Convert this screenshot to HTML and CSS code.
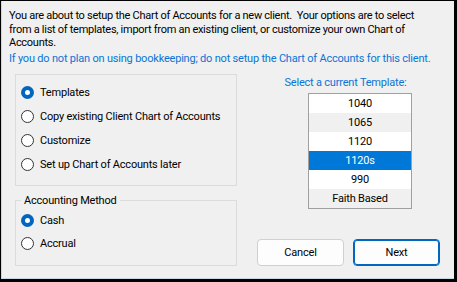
FILE: index.html
```html
<!DOCTYPE html>
<html lang="en">

<head>
    <meta charset="UTF-8">
    <meta name="viewport" content="width=device-width, initial-scale=1.0">
    <title>Chart of Accounts Setup</title>
    <link rel="stylesheet" href="styles.css">
</head>

<body>
    <div class="window">
        <p class="intro">You are about to setup the Chart of Accounts for a new client.&nbsp; Your options are to select<br>from a list of templates, import from an existing client, or customize your own Chart of<br>Accounts.</p>
        <p class="note">If you do not plan on using bookkeeping; do not setup the Chart of Accounts for this client.</p>

        <div class="main">
            <div class="left">
                <fieldset class="group options">
                    <label class="option"><span class="radio checked"></span>Templates</label>
                    <label class="option"><span class="radio"></span>Copy existing Client Chart of Accounts</label>
                    <label class="option"><span class="radio"></span>Customize</label>
                    <label class="option"><span class="radio"></span>Set up Chart of Accounts later</label>
                </fieldset>

                <fieldset class="group method">
                    <legend>Accounting Method</legend>
                    <label class="option"><span class="radio checked"></span>Cash</label>
                    <label class="option"><span class="radio"></span>Accrual</label>
                </fieldset>
            </div>

            <div class="right">
                <div class="list-label">Select a current Template:</div>
                <ul class="listbox">
                    <li>1040</li>
                    <li class="alt">1065</li>
                    <li>1120</li>
                    <li class="selected">1120s</li>
                    <li>990</li>
                    <li class="alt">Faith Based</li>
                </ul>
                <div class="buttons">
                    <button class="btn">Cancel</button>
                    <button class="btn default">Next</button>
                </div>
            </div>
        </div>
    </div>
</body>

</html>
```

FILE: styles.css
```css
body {
    margin: 0;
    padding: 0;
    background-color: #000;
    font-family: Roboto, "Liberation Sans", Arial, sans-serif;
    font-size: 11px;
    letter-spacing: -0.2px;
    color: #000;
}

.window {
    box-sizing: border-box;
    width: 457px;
    height: 282px;
    background-color: #f0f0f0;
    border-top: 1px solid #000;
    border-left: 1px solid #000;
    border-right: 3px solid #000;
    border-bottom: 3px solid #000;
    box-shadow: inset 1px 0 0 #c9d6e8, inset 0 -1px 0 #c9d6e8;
    padding: 8px 0 0 8px;
    white-space: nowrap;
}

.intro {
    margin: 0;
    line-height: 13.5px;
    letter-spacing: -0.28px;
}

.note {
    margin: 2px 0 0 0;
    color: #0a74d6;
    line-height: 13px;
}

.main {
    display: flex;
    margin-top: 9px;
}

.left {
    width: 222px;
    margin-left: 6px;
}

.group {
    box-sizing: border-box;
    margin: 0;
    border: 1px solid #dcdcdc;
    min-inline-size: 0;
}

.options {
    height: 112px;
    padding: 8px 0 0 5px;
    display: flex;
    flex-direction: column;
    gap: 5px;
}

.method {
    margin-top: 8px;
    height: 72px;
    padding: 4px 0 0 5px;
    display: flex;
    flex-direction: column;
    gap: 4px;
}

.method legend {
    padding: 0 3px;
    line-height: 13px;
}

.option {
    display: flex;
    align-items: center;
    height: 19px;
    gap: 6px;
}

.radio {
    flex-shrink: 0;
    box-sizing: border-box;
    width: 13px;
    height: 13px;
    border: 1px solid #333;
    border-radius: 50%;
    background-color: #fff;
}

.radio.checked {
    border: 4px solid #0067c0;
}

.right {
    flex: 1;
    display: flex;
    flex-direction: column;
    align-items: center;
}

.list-label {
    color: #0a74d6;
    margin-top: 2px;
    line-height: 13px;
}

.listbox {
    align-self: flex-start;
    list-style: none;
    margin: 4px 0 0 71px;
    padding: 0;
    width: 102px;
    border: 1px solid #a0a0a0;
    background-color: #fff;
}

.listbox li {
    height: 19px;
    line-height: 19px;
    text-align: center;
}

.listbox li.alt {
    background-color: #f0f0f0;
}

.listbox li.selected {
    background-color: #0078d7;
    color: #fff;
}

.buttons {
    align-self: flex-start;
    display: flex;
    gap: 9px;
    margin: 30px 0 0 20px;
}

.btn {
    width: 87px;
    height: 27px;
    font-family: inherit;
    font-size: 11px;
    letter-spacing: -0.2px;
    color: #000;
    background-color: #fdfdfd;
    border: 1px solid #d0d0d0;
    border-radius: 4px;
}

.btn.default {
    border: 1px solid #0067c0;
    box-shadow: inset 0 0 0 1px #0067c0;
}
```
